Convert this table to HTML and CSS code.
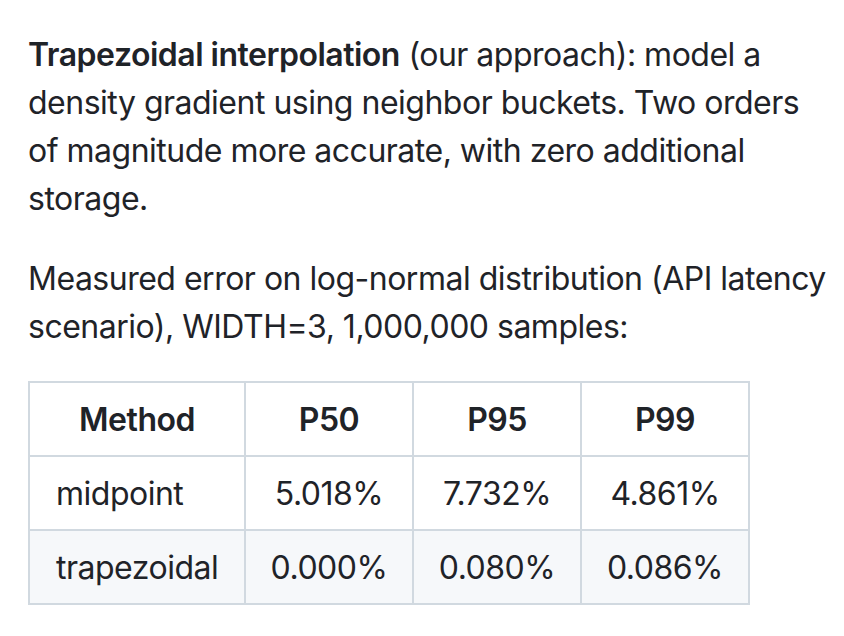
FILE: index.html
```html
<!DOCTYPE html>
<html>
<head>
<meta charset="utf-8">
<link rel="stylesheet" href="styles.css">
</head>
<body>
<div class="markdown">
<p><strong>Trapezoidal interpolation</strong> (our approach): model a density gradient using neighbor buckets. Two orders of magnitude more accurate, with zero additional storage.</p>
<p class="wide">Measured error on log-normal distribution (API latency scenario), WIDTH=3, 1,000,000 samples:</p>
<table class="results">
<colgroup><col class="c-method"><col class="c-num"><col class="c-num"><col class="c-num"></colgroup>
<thead>
<tr><th>Method</th><th>P50</th><th>P95</th><th>P99</th></tr>
</thead>
<tbody>
<tr><td class="left">midpoint</td><td>5.018%</td><td>7.732%</td><td>4.861%</td></tr>
<tr><td class="left">trapezoidal</td><td>0.000%</td><td>0.080%</td><td>0.086%</td></tr>
</tbody>
</table>
</div>
</body>
</html>
```
FILE: styles.css
```css
html, body {
  margin: 0;
  padding: 0;
  background: #ffffff;
}
.markdown {
  padding: 31px 28px 0 28px;
  width: 792px;
  font-family: Inter, "Liberation Sans", sans-serif;
  font-size: 32px;
  line-height: 48px;
  letter-spacing: -0.5px;
  color: #1f2328;
}
.markdown p {
  margin: 0 0 32px 0;
}
.markdown p.wide {
  margin-right: -24px;
}
.markdown strong {
  font-weight: 600;
}
.results {
  border-collapse: collapse;
  border-spacing: 0;
  margin-top: -2px;
}
.c-method { width: 216px; }
.c-num { width: 168px; }
.results th,
.results td {
  border: 2px solid #d1d9e0;
  padding: 13px 20px 11px 20px;
  text-align: center;
  font-weight: 400;
}
.results th {
  font-weight: 600;
}
.results td.left {
  padding-left: 26px;
  text-align: left;
}
.results tbody tr:nth-child(2) {
  background: #f6f8fa;
}
```
